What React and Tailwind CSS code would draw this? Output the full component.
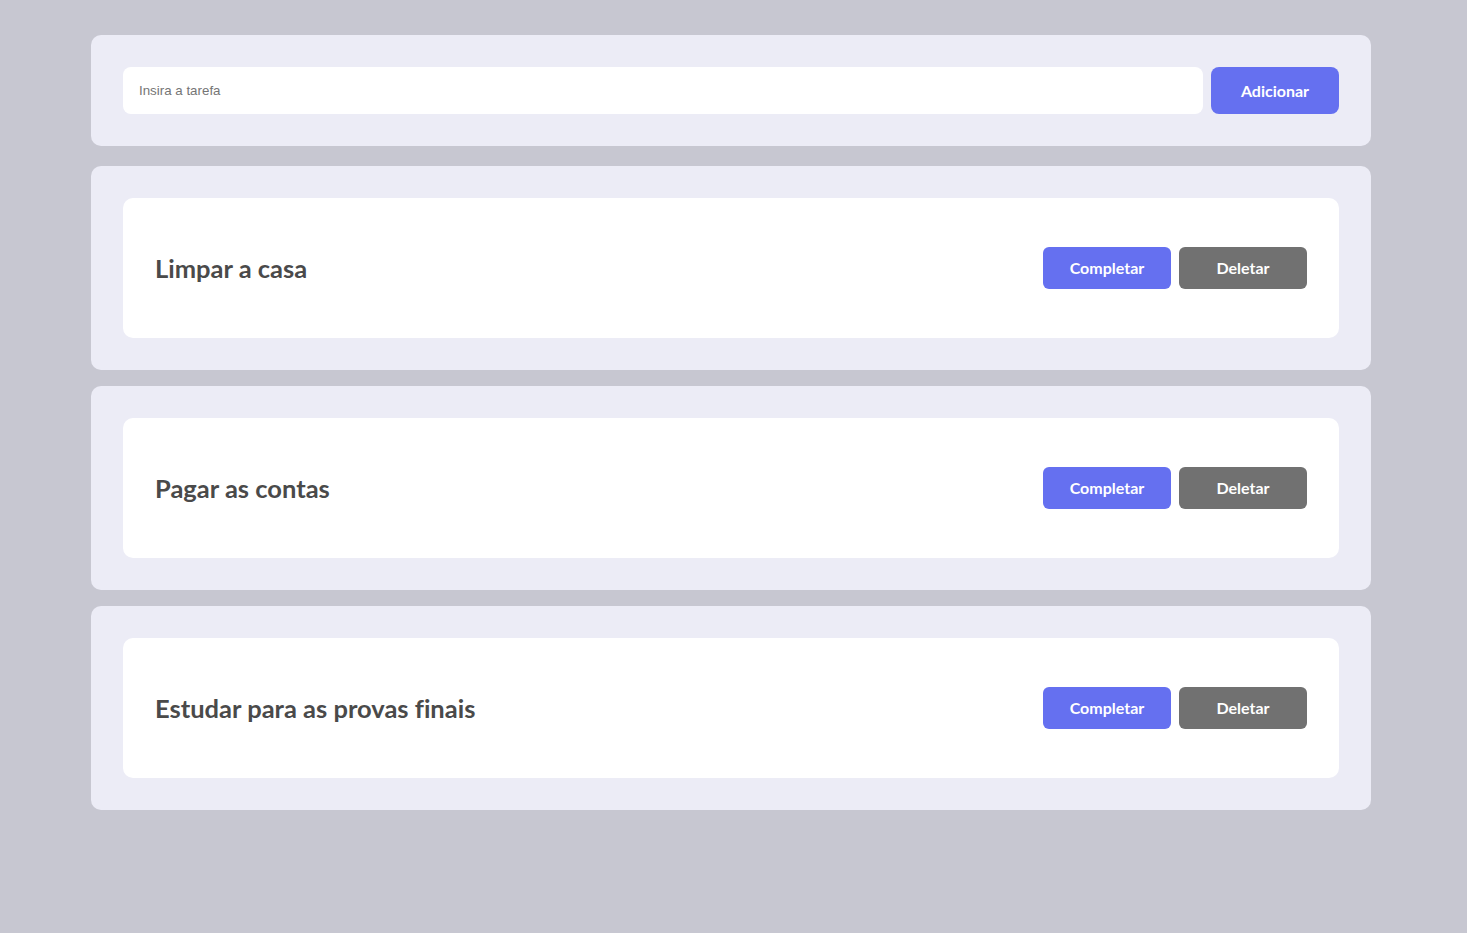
import React, { useState } from "react";

const initialTasks = [
  { id: 1, title: "Limpar a casa" },
  { id: 2, title: "Pagar as contas" },
  { id: 3, title: "Estudar para as provas finais" },
];

export default function App() {
  const [tasks, setTasks] = useState(initialTasks);
  const [text, setText] = useState("");

  const addTask = (e) => {
    e.preventDefault();
    if (!text.trim()) return;
    setTasks([...tasks, { id: Date.now(), title: text.trim() }]);
    setText("");
  };

  return (
    <div className="min-h-screen bg-[#c7c7d1] pt-[35px] pb-10 font-['Lato',sans-serif]">
      <div className="w-[1280px] ml-[91px]">
        <form onSubmit={addTask} className="flex gap-2 p-8 mb-5 bg-[#ececf6] rounded-[10px]">
          <input
            value={text}
            onChange={(e) => setText(e.target.value)}
            placeholder="Insira a tarefa"
            className="flex-1 h-[47px] px-4 bg-white rounded-lg text-[13.33px] text-[#333] placeholder:text-[#757575] outline-none font-['Liberation_Sans',Arial,sans-serif]"
          />
          <button type="submit" className="w-32 h-[47px] rounded-lg bg-[#6570f0] text-white text-base font-bold">
            Adicionar
          </button>
        </form>

        <ul className="flex flex-col gap-4">
          {tasks.map((task) => (
            <li key={task.id} className="p-8 bg-[#ececf6] rounded-[10px]">
              <div className="flex items-center justify-between h-[140px] px-8 bg-white rounded-[10px]">
                <span className="text-[25.5px] font-bold text-[#4a4a4a] [font-variant-ligatures:none]">
                  {task.title}
                </span>
                <div className="flex gap-2">
                  <button className="w-32 h-[42px] rounded-md bg-[#6570f0] text-white text-base font-bold">
                    Completar
                  </button>
                  <button
                    onClick={() => setTasks(tasks.filter((t) => t.id !== task.id))}
                    className="w-32 h-[42px] rounded-md bg-[#717171] text-white text-base font-bold"
                  >
                    Deletar
                  </button>
                </div>
              </div>
            </li>
          ))}
        </ul>
      </div>
    </div>
  );
}
